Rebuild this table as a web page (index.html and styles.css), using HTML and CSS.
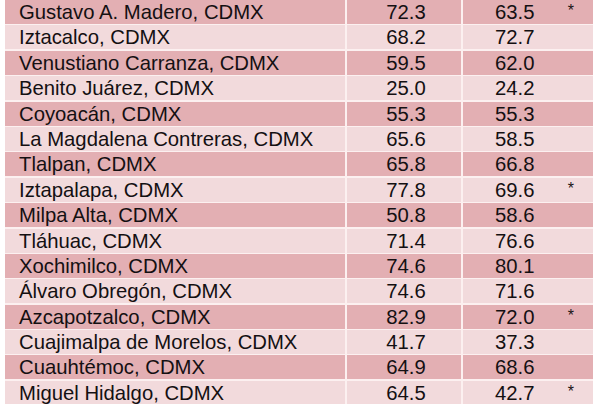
FILE: index.html
```html
<!DOCTYPE html>
<html lang="es">
<head>
<meta charset="utf-8">
<link rel="stylesheet" href="styles.css">
</head>
<body>
<div class="table">
  <div class="row dark"><div class="c name">Gustavo A. Madero, CDMX</div><div class="c v1">72.3</div><div class="c v2"><span class="num">63.5</span><span class="ast">*</span></div></div>
  <div class="row light"><div class="c name">Iztacalco, CDMX</div><div class="c v1">68.2</div><div class="c v2"><span class="num">72.7</span></div></div>
  <div class="row dark"><div class="c name">Venustiano Carranza, CDMX</div><div class="c v1">59.5</div><div class="c v2"><span class="num">62.0</span></div></div>
  <div class="row light"><div class="c name">Benito Juárez, CDMX</div><div class="c v1">25.0</div><div class="c v2"><span class="num">24.2</span></div></div>
  <div class="row dark"><div class="c name">Coyoacán, CDMX</div><div class="c v1">55.3</div><div class="c v2"><span class="num">55.3</span></div></div>
  <div class="row light"><div class="c name">La Magdalena Contreras, CDMX</div><div class="c v1">65.6</div><div class="c v2"><span class="num">58.5</span></div></div>
  <div class="row dark"><div class="c name">Tlalpan, CDMX</div><div class="c v1">65.8</div><div class="c v2"><span class="num">66.8</span></div></div>
  <div class="row light"><div class="c name">Iztapalapa, CDMX</div><div class="c v1">77.8</div><div class="c v2"><span class="num">69.6</span><span class="ast">*</span></div></div>
  <div class="row dark"><div class="c name">Milpa Alta, CDMX</div><div class="c v1">50.8</div><div class="c v2"><span class="num">58.6</span></div></div>
  <div class="row light"><div class="c name">Tláhuac, CDMX</div><div class="c v1">71.4</div><div class="c v2"><span class="num">76.6</span></div></div>
  <div class="row dark"><div class="c name">Xochimilco, CDMX</div><div class="c v1">74.6</div><div class="c v2"><span class="num">80.1</span></div></div>
  <div class="row light"><div class="c name">Álvaro Obregón, CDMX</div><div class="c v1">74.6</div><div class="c v2"><span class="num">71.6</span></div></div>
  <div class="row dark"><div class="c name">Azcapotzalco, CDMX</div><div class="c v1">82.9</div><div class="c v2"><span class="num">72.0</span><span class="ast">*</span></div></div>
  <div class="row light"><div class="c name">Cuajimalpa de Morelos, CDMX</div><div class="c v1">41.7</div><div class="c v2"><span class="num">37.3</span></div></div>
  <div class="row dark"><div class="c name">Cuauhtémoc, CDMX</div><div class="c v1">64.9</div><div class="c v2"><span class="num">68.6</span></div></div>
  <div class="row light"><div class="c name">Miguel Hidalgo, CDMX</div><div class="c v1">64.5</div><div class="c v2"><span class="num">42.7</span><span class="ast">*</span></div></div>
</div>
</body>
</html>
```
FILE: styles.css
```css
html, body {
  margin: 0;
  padding: 0;
  background: #ffffff;
}
.table {
  margin-left: 5px;
  width: 588px;
  display: flex;
  flex-direction: column;
  gap: 1.4px;
  background: #fcf0f0;
  font-family: "Liberation Sans", Arial, sans-serif;
  font-size: 20.3px;
  color: #141012;
}
.row {
  display: grid;
  grid-template-columns: 340px 114px 130px;
  column-gap: 2px;
  height: 24px;
}
.c {
  height: 24px;
  line-height: 25px;
  white-space: nowrap;
  overflow: hidden;
}
.dark .c { background: #e3afb3; }
.light .c { background: #f2dadc; }
.name {
  padding-left: 14px;
}
.v1 {
  text-align: center;
  padding-left: 4px;
}
.v2 {
  display: flex;
  padding-left: 32px;
  padding-right: 19px;
}
.ast {
  margin-left: auto;
  font-size: 16px;
  line-height: 22px;
  color: #1a1416;
}
```
